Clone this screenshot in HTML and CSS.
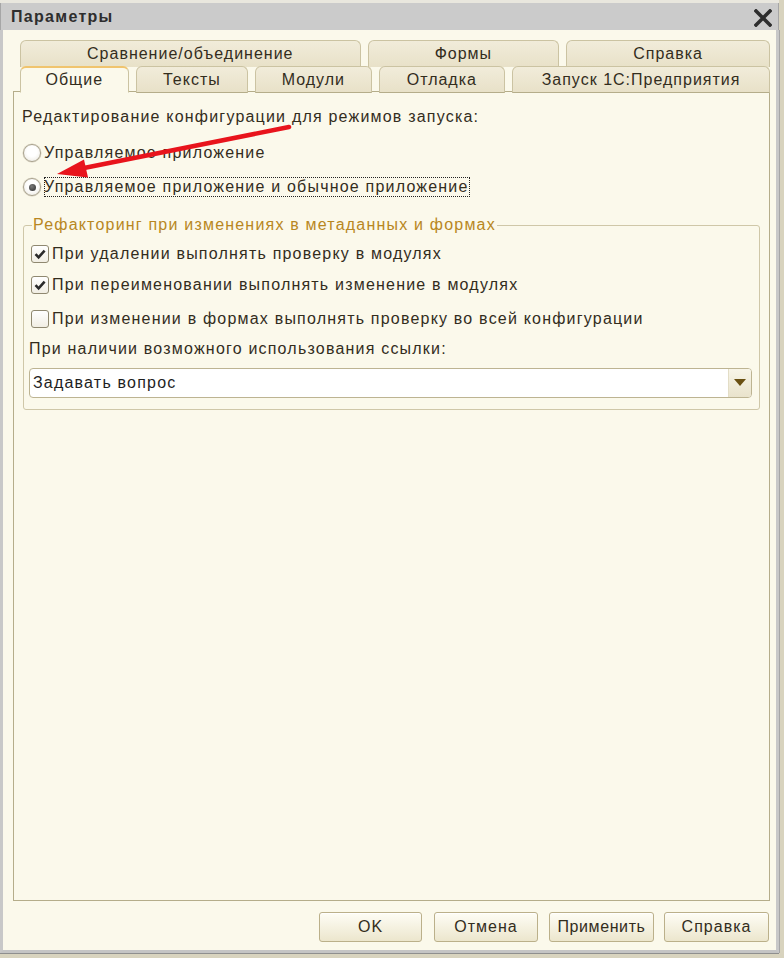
FILE: index.html
```html
<!DOCTYPE html>
<html lang="ru">
<head>
<meta charset="utf-8">
<title>Параметры</title>
<link rel="stylesheet" href="styles.css">
</head>
<body>
<div class="window">
  <div class="titlebar">
    <span class="title">Параметры</span>
    <svg class="close" width="18" height="18" viewBox="0 0 18 18"><path d="M2 2 L16 16 M16 2 L2 16" stroke="#2e2e2e" stroke-width="3.6" stroke-linecap="square"/></svg>
  </div>
  <div class="body">
    <div class="tabs">
      <div class="tab-row row1">
        <div class="tab w340">Сравнение/объединение</div>
        <div class="tab w191">Формы</div>
        <div class="tab w203">Справка</div>
      </div>
      <div class="tab-row row2">
        <div class="tab active w108">Общие</div>
        <div class="tab w112">Тексты</div>
        <div class="tab w116">Модули</div>
        <div class="tab w126">Отладка</div>
        <div class="tab w258">Запуск 1С:Предприятия</div>
      </div>
    </div>
    <div class="panel">
      <div class="heading">Редактирование конфигурации для режимов запуска:</div>
      <div class="radio-row r1"><span class="radio"></span><span class="label">Управляемое приложение</span></div>
      <div class="radio-row r2"><span class="radio checked"></span><span class="label focus">Управляемое приложение и обычное приложение</span></div>
      <fieldset class="group">
        <legend>Рефакторинг при изменениях в метаданных и формах</legend>
        <div class="check-row c1"><span class="check on"><svg width="14" height="14" viewBox="0 0 14 14"><path d="M2.5 7.2 L5.6 10.3 L11.6 3.6" fill="none" stroke="#2a2a2a" stroke-width="2.6"/></svg></span><span class="label">При удалении выполнять проверку в модулях</span></div>
        <div class="check-row c2"><span class="check on"><svg width="14" height="14" viewBox="0 0 14 14"><path d="M2.5 7.2 L5.6 10.3 L11.6 3.6" fill="none" stroke="#2a2a2a" stroke-width="2.6"/></svg></span><span class="label">При переименовании выполнять изменение в модулях</span></div>
        <div class="check-row c3"><span class="check"></span><span class="label">При изменении в формах выполнять проверку во всей конфигурации</span></div>
        <div class="plain c4">При наличии возможного использования ссылки:</div>
        <div class="combo">
          <span class="combo-text">Задавать вопрос</span>
          <span class="combo-btn"><svg width="12" height="8" viewBox="0 0 12 8"><path d="M0 0 H12 L6 7 Z" fill="#6a5012"/></svg></span>
        </div>
      </fieldset>
    </div>
    <div class="buttons">
      <div class="btn b-ok">OK</div>
      <div class="btn b-cancel">Отмена</div>
      <div class="btn b-apply">Применить</div>
      <div class="btn b-help">Справка</div>
    </div>
  </div>
</div>
<svg class="arrow" width="784" height="958" viewBox="0 0 784 958">
  <line x1="289" y1="127" x2="84" y2="168" stroke="#e8141c" stroke-width="4.6" stroke-linecap="round"/>
  <polygon points="57,174 84,159.5 88,177.5" fill="#e8141c"/>
</svg>
</body>
</html>
```
FILE: styles.css
```css
html, body {
  margin: 0;
  padding: 0;
}
body {
  width: 784px;
  height: 958px;
  background: #d8d3be;
  font-family: "Liberation Sans", Arial, sans-serif;
  font-size: 16px;
  letter-spacing: 1.2px;
  color: #332d1d;
  position: relative;
  overflow: hidden;
}
.window {
  width: 779px;
  height: 953px;
  display: flex;
  flex-direction: column;
  box-sizing: border-box;
  border-top: 3px solid #e9e7de;
}
.titlebar {
  height: 27px;
  background: #cbcbcb;
  display: flex;
  align-items: center;
  justify-content: space-between;
  padding: 0 6px 0 10px;
  border-left: 1px solid #a6a6a6;
  border-right: 1px solid #a6a6a6;
}
.title {
  font-size: 16px;
  color: #2e2e2e;
  font-weight: bold;
  letter-spacing: 1.3px;
  padding-top: 1px;
}
.close {
  display: block;
  margin-top: 2px;
}
.body {
  flex: 1;
  display: flex;
  flex-direction: column;
  background: #fbf9eb;
  border-left: 3px solid #c8c8c8;
  border-right: 3px solid #c8c8c8;
  border-bottom: 3px solid #c4c4c4;
  box-shadow: -1px 0 0 #a6a6a6, 1px 0 0 #a6a6a6, 0 1px 0 #8e8e8e;
  padding: 10px 6px 8px 10px;
}
.tabs {
  display: flex;
  flex-direction: column;
  padding-left: 7px;
}
.tab-row {
  display: flex;
  gap: 7px;
  height: 26px;
}
.tab {
  box-sizing: border-box;
  height: 26px;
  line-height: 25px;
  text-align: center;
  border: 1px solid #cbc3a2;
  border-bottom: none;
  border-radius: 6px 6px 0 0;
  background: linear-gradient(#f1ecda, #e8e1c8);
  color: #332d1d;
  white-space: nowrap;
  letter-spacing: 1px;
}
.row1 .tab {
  height: 27px;
}
.row2 {
  position: relative;
  z-index: 1;
  margin-bottom: -1px;
}
.row2 .tab {
  border-bottom: 1px solid #b5ad8a;
  height: 27px;
}
.row2 .tab.active {
  background: #fbf9eb;
  border-bottom: 1px solid #fbf9eb;
  border-top: 2px solid #f0c46e;
  line-height: 24px;
}
.w340 { width: 341px; }
.w191 { width: 192px; }
.w203 { width: 204px; }
.w108 { width: 109px; }
.w112 { width: 113px; }
.w116 { width: 117px; }
.w126 { width: 127px; }
.w258 { width: 259px; }
.panel {
  flex: 1;
  border: 1px solid #b5ad8a;
  background: #fbf9eb;
  padding: 15px 0 0 8px;
  display: flex;
  flex-direction: column;
}
.heading {
  line-height: 20px;
  white-space: nowrap;
}
.radio-row {
  display: flex;
  align-items: center;
  height: 20px;
  margin-left: 1px;
}
.r1 { margin-top: 16px; }
.r2 { margin-top: 14px; }
.radio {
  width: 16px;
  height: 16px;
  border-radius: 50%;
  border: 1px solid #a7a08c;
  background: radial-gradient(circle at 50% 40%, #ffffff 40%, #e9e6dc 100%);
  box-shadow: 0 0 0 0.5px #d6d1bf;
  display: flex;
  align-items: center;
  justify-content: center;
  margin-right: 3px;
  flex: none;
}
.radio.checked::after {
  content: "";
  width: 7px;
  height: 7px;
  border-radius: 50%;
  background: radial-gradient(circle at 40% 35%, #7a7a7a, #2d2d2d);
}
.label {
  line-height: 20px;
  white-space: nowrap;
}
.focus {
  outline: 1px dotted #222;
  outline-offset: -1px;
  padding-right: 1px;
}
.group {
  margin: 18px 9px 0 1px;
  padding: 9px 7px 11px 5px;
  border: 1px solid #cfc7a8;
  border-radius: 3px;
  display: flex;
  flex-direction: column;
  min-width: 0;
}
.group legend {
  color: #b88722;
  line-height: 20px;
  padding: 0 1px;
  margin-left: 3px;
  white-space: nowrap;
}
.check-row {
  display: flex;
  align-items: center;
  height: 20px;
  padding-left: 2px;
}
.c2 { margin-top: 11px; }
.c3 { margin-top: 14px; }
.check {
  width: 16px;
  height: 16px;
  border: 1px solid #8f8870;
  border-radius: 3px;
  background: linear-gradient(#ffffff, #f1eee3);
  display: flex;
  align-items: center;
  justify-content: center;
  margin-right: 3px;
  flex: none;
}
.check svg { display: block; }
.plain {
  line-height: 20px;
  margin-top: 10px;
  white-space: nowrap;
}
.combo {
  margin-top: 9px;
  height: 30px;
  box-sizing: border-box;
  border: 1px solid #bdb492;
  border-radius: 4px;
  background: #ffffff;
  display: flex;
  align-items: stretch;
  overflow: hidden;
}
.combo-text {
  flex: 1;
  line-height: 28px;
  padding-left: 3px;
  color: #1e1e1e;
}
.combo-btn {
  width: 22px;
  border-left: 1px solid #e3ddc6;
  background: linear-gradient(#f8f5e8, #e9e3cc);
  display: flex;
  align-items: center;
  justify-content: center;
}
.combo-btn svg { display: block; }
.buttons {
  display: flex;
  justify-content: flex-end;
  margin-top: 11px;
  padding-right: 1px;
}
.btn {
  box-sizing: border-box;
  height: 30px;
  line-height: 28px;
  text-align: center;
  border: 1px solid #bbb08a;
  border-radius: 3px;
  background: linear-gradient(#fefdf5, #ece6cd);
  box-shadow: inset 0 1px 0 #ffffff;
  color: #332d1d;
  letter-spacing: 1px;
}
.b-ok { width: 103px; }
.b-cancel { width: 104px; margin-left: 12px; }
.b-apply { width: 105px; margin-left: 11px; letter-spacing: 0.6px; }
.b-help { width: 105px; margin-left: 10px; }
.arrow {
  position: absolute;
  left: 0;
  top: 0;
  pointer-events: none;
}
```
